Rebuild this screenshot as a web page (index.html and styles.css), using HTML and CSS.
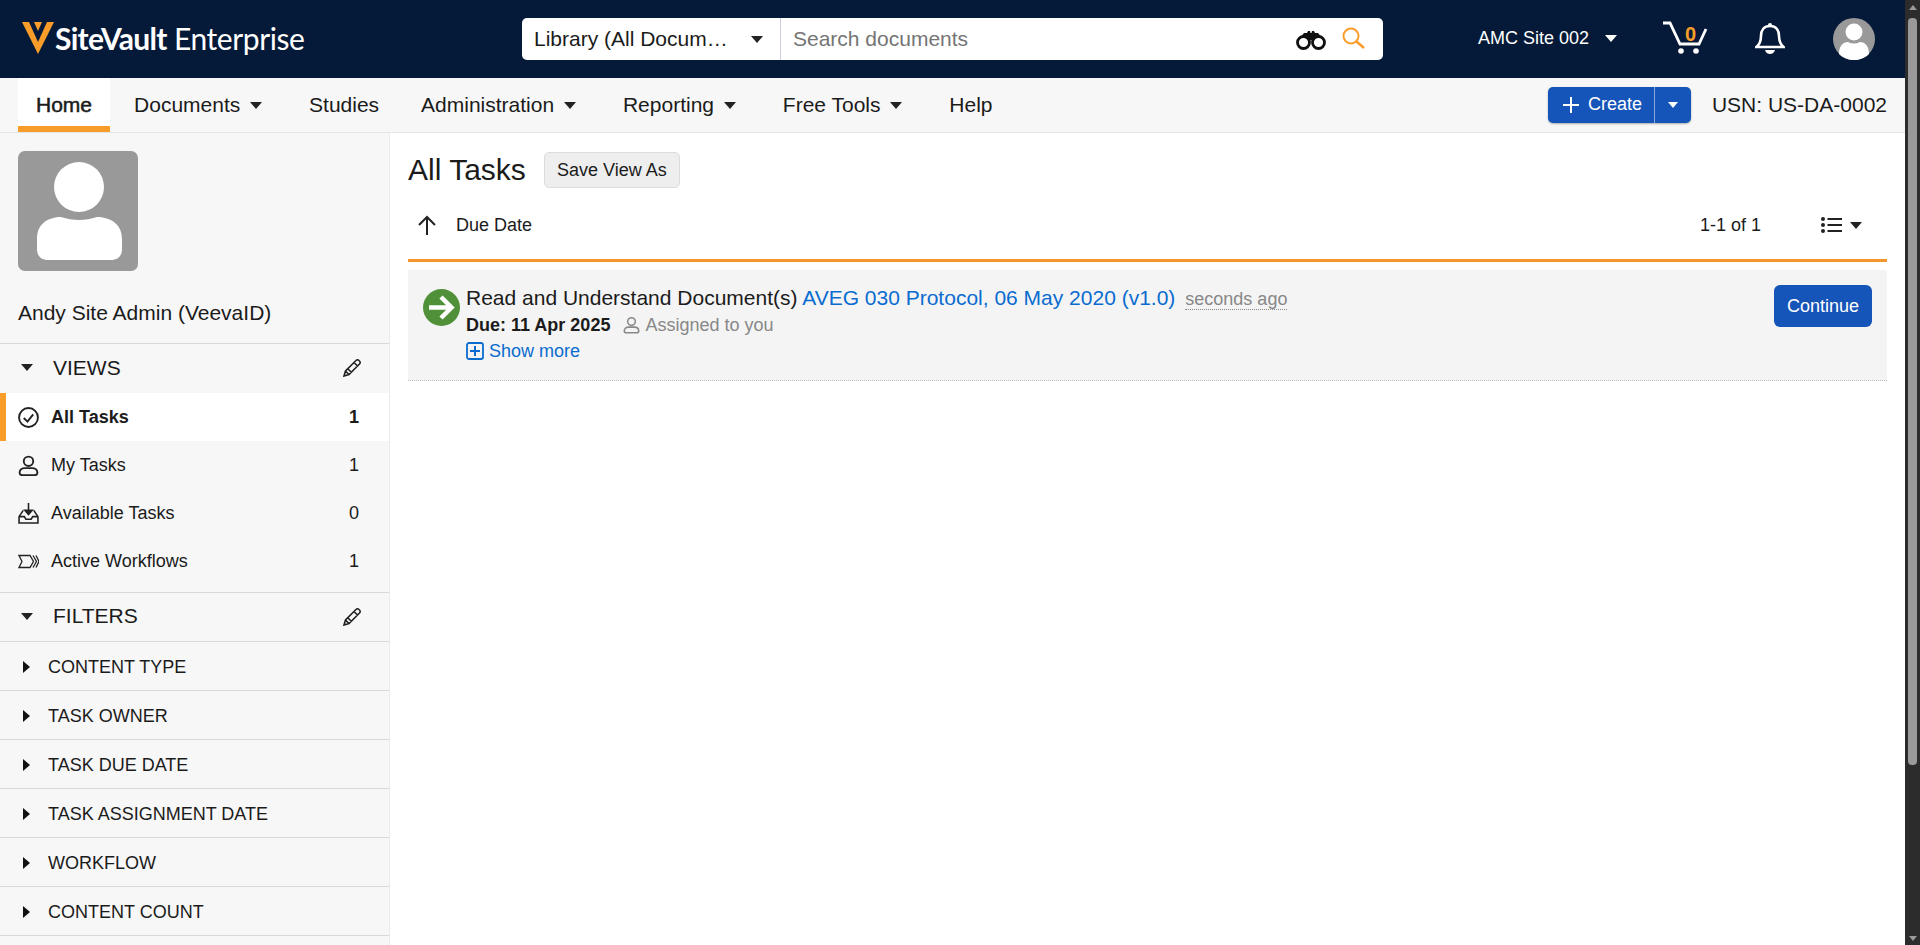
FILE: index.html
```html
<!DOCTYPE html>
<html lang="en">
<head>
<meta charset="utf-8">
<title>SiteVault Enterprise</title>
<link rel="stylesheet" href="styles.css">
</head>
<body>
<div class="app">
  <header class="topbar">
    <div class="logo">
      <svg class="logo-mark" viewBox="0 0 32 32"><path fill="#f99d2a" d="M0 0H32L16 32Z"/><path fill="#051a38" d="M7 0H25L16 20Z"/><path fill="#f99d2a" d="M12 0H20L16 9Z"/></svg>
      <span class="logo-text"><b>SiteVault</b> Enterprise</span>
    </div>
    <div class="search">
      <div class="scope"><span class="scope-text">Library (All Docum…</span><i class="caret caret-dark"></i></div>
      <div class="search-input">Search documents</div>
      <svg class="binoculars" viewBox="0 0 30 19"><circle cx="7.500" cy="11.500" r="6" fill="none" stroke="#111" stroke-width="2.800"/><circle cx="22.500" cy="11.500" r="6" fill="none" stroke="#111" stroke-width="2.800"/><path fill="#111" d="M3 8 8 2h3l1-2h2l.500 2h1L16 0h2l1 2h3l5 6-5-2.500-4 3.500h-6L8 5.500Z"/></svg>
      <svg class="magnifier" viewBox="0 0 23 22"><circle cx="9" cy="9" r="7.500" fill="none" stroke="#f99d2a" stroke-width="2"/><path d="M14.500 14.500 22 21" stroke="#f99d2a" stroke-width="2.500" fill="none"/></svg>
    </div>
    <div class="site">AMC Site 002<i class="caret caret-white"></i></div>
    <div class="cart">
      <svg class="cart-icon" viewBox="0 0 46 33"><path d="M1 2h7l10 21h19l7-15" fill="none" stroke="#fff" stroke-width="2.800"/><circle cx="19" cy="30" r="2.800" fill="#fff"/><circle cx="34" cy="30" r="2.800" fill="#fff"/></svg>
      <span class="cart-count">0</span>
    </div>
    <svg class="bell" viewBox="0 0 30 33"><path d="M15 4c-6 0-9 4-9 10 0 5-1 8-4.500 11h27C25 22 24 19 24 14c0-6-3-10-9-10Z" fill="none" stroke="#fff" stroke-width="2.600"/><circle cx="15" cy="3" r="2" fill="#fff"/><path d="M10 28h10c-1 3-3 4-5 4s-4-1-5-4Z" fill="#fff"/></svg>
    <svg class="user-avatar" viewBox="0 0 42 42"><circle cx="21" cy="21" r="21" fill="#999"/><circle cx="21" cy="14" r="8.500" fill="#fff"/><path d="M6 36c0-8 4-12 9-12 4 2 8 2 12 0 5 0 9 4 9 12-4 4-10 6-15 6s-11-2-15-6Z" fill="#fff"/></svg>
  </header>

  <nav class="navbar">
    <a class="nav-item nav-active">Home</a>
    <a class="nav-item">Documents<i class="caret caret-dark"></i></a>
    <a class="nav-item">Studies</a>
    <a class="nav-item">Administration<i class="caret caret-dark"></i></a>
    <a class="nav-item">Reporting<i class="caret caret-dark"></i></a>
    <a class="nav-item">Free Tools<i class="caret caret-dark"></i></a>
    <a class="nav-item">Help</a>
    <div class="nav-right">
      <div class="create">
        <span class="create-main"><svg class="plus" viewBox="0 0 16 16"><path d="M8 0v16M0 8h16" stroke="#fff" stroke-width="2"/></svg><span class="create-label">Create</span></span>
        <span class="create-drop"><i class="caret caret-white"></i></span>
      </div>
      <span class="usn">USN: US-DA-0002</span>
    </div>
  </nav>

  <div class="body">
    <aside class="sidebar">
      <div class="profile">
        <svg class="profile-pic" viewBox="0 0 120 120"><circle cx="61" cy="36" r="25" fill="#fff"/><path d="M19 90V88c0-16 12-22 24-22 12 4 24 4 36 0 12 0 25 6 25 22v10c0 7-4 11-11 11H30c-7 0-11-4-11-11Z" fill="#fff"/></svg>
        <div class="profile-name">Andy Site Admin (VeevaID)</div>
      </div>
      <div class="section-head">
        <i class="caret caret-dark"></i><span class="section-title">VIEWS</span>
        <svg class="pencil" viewBox="0 0 19 19"><path d="M1 18l1.500-5L13 2.500a2 2 0 0 1 3 0l.500.500a2 2 0 0 1 0 3L6 16.500ZM2.500 13l3.500 3.500M11 4.500l3.500 3.500M5 11l3.500 3.500" fill="none" stroke="#222" stroke-width="1.600"/></svg>
      </div>
      <ul class="views">
        <li class="view view-active">
          <svg class="view-icon" viewBox="0 0 20 20"><circle cx="10" cy="10" r="9" fill="none" stroke="#222" stroke-width="1.800"/><path d="M5.500 10.500 9 14l5.500-7" fill="none" stroke="#222" stroke-width="1.800"/></svg>
          <span class="view-label">All Tasks</span><span class="view-count">1</span>
        </li>
        <li class="view">
          <svg class="view-icon" viewBox="0 0 20 20"><circle cx="10" cy="6" r="4.500" fill="none" stroke="#222" stroke-width="1.800"/><path d="M4 19.200h12c1.500 0 2.500-1 2.500-2.200 0-3-2.500-4.500-5-4.500h-7c-2.500 0-5 1.500-5 4.500 0 1.200 1 2.200 2.500 2.200Z" fill="none" stroke="#222" stroke-width="1.800"/></svg>
          <span class="view-label">My Tasks</span><span class="view-count">1</span>
        </li>
        <li class="view">
          <svg class="view-icon" viewBox="0 0 20 20"><path d="M10 0v10M6.500 7 10 11l3.500-4Z" fill="#222" stroke="#222" stroke-width="1.500"/><path d="M5 7 1 13v6h18v-6l-4-6M1 13h5l1.500 2.500h5L14 13h5" fill="none" stroke="#222" stroke-width="1.500"/></svg>
          <span class="view-label">Available Tasks</span><span class="view-count">0</span>
        </li>
        <li class="view">
          <svg class="view-icon" viewBox="0 0 21 14"><path d="M1 1h11l3.500 6L12 13H1l3-6Z M15 1l3.500 6-3.500 6 M18 1l3 6-3 6" fill="none" stroke="#222" stroke-width="1.300"/></svg>
          <span class="view-label">Active Workflows</span><span class="view-count">1</span>
        </li>
      </ul>
      <div class="section-head section-filters">
        <i class="caret caret-dark"></i><span class="section-title">FILTERS</span>
        <svg class="pencil" viewBox="0 0 19 19"><path d="M1 18l1.500-5L13 2.500a2 2 0 0 1 3 0l.500.500a2 2 0 0 1 0 3L6 16.500ZM2.500 13l3.500 3.500M11 4.500l3.500 3.500M5 11l3.500 3.500" fill="none" stroke="#222" stroke-width="1.600"/></svg>
      </div>
      <div class="filter"><i class="caret-right"></i>CONTENT TYPE</div>
      <div class="filter"><i class="caret-right"></i>TASK OWNER</div>
      <div class="filter"><i class="caret-right"></i>TASK DUE DATE</div>
      <div class="filter"><i class="caret-right"></i>TASK ASSIGNMENT DATE</div>
      <div class="filter"><i class="caret-right"></i>WORKFLOW</div>
      <div class="filter"><i class="caret-right"></i>CONTENT COUNT</div>
    </aside>

    <main class="main">
      <div class="title-row">
        <h1 class="page-title">All Tasks</h1>
        <button class="save-view">Save View As</button>
      </div>
      <div class="sort-row">
        <svg class="sort-arrow" viewBox="0 0 20 20"><path d="M10 20V2M2 10l8-8 8 8" fill="none" stroke="#222" stroke-width="2"/></svg>
        <span class="sort-label">Due Date</span>
        <span class="pager">1-1 of 1</span>
        <svg class="list-icon" viewBox="0 0 21 16"><g fill="#222"><circle cx="2" cy="2" r="2"/><circle cx="2" cy="8" r="2"/><circle cx="2" cy="14" r="2"/><rect x="6.500" y="1" width="14.500" height="2"/><rect x="6.500" y="7" width="14.500" height="2"/><rect x="6.500" y="13" width="14.500" height="2"/></g></svg>
        <i class="caret caret-dark list-caret"></i>
      </div>
      <article class="task">
        <svg class="task-status" viewBox="0 0 37 37"><circle cx="18.500" cy="18.500" r="18.500" fill="#4f9038"/><path d="M6 18.500h22M18 8l10.500 10.500L18 29" fill="none" stroke="#fff" stroke-width="4.500"/></svg>
        <div class="task-body">
          <div class="task-title">Read and Understand Document(s) <a class="task-link">AVEG 030 Protocol, 06 May 2020 (v1.0)</a><span class="task-age">seconds ago</span></div>
          <div class="task-meta"><b class="task-due">Due: 11 Apr 2025</b>
            <svg class="assign-icon" viewBox="0 0 20 20"><circle cx="10" cy="6" r="4.500" fill="none" stroke="#888" stroke-width="1.800"/><path d="M4 19.200h12c1.500 0 2.500-1 2.500-2.200 0-3-2.500-4.500-5-4.500h-7c-2.500 0-5 1.500-5 4.500 0 1.200 1 2.200 2.500 2.200Z" fill="none" stroke="#888" stroke-width="1.800"/></svg>
            <span class="assigned">Assigned to you</span></div>
          <div class="task-more"><svg class="more-icon" viewBox="0 0 18 18"><rect x="1" y="1" width="16" height="16" rx="2" fill="none" stroke="#0a6cd0" stroke-width="1.800"/><path d="M9 4v10M4 9h10" stroke="#0a6cd0" stroke-width="2"/></svg><a class="task-link">Show more</a></div>
        </div>
        <button class="continue">Continue</button>
      </article>
    </main>
  </div>
</div>
<div class="scrollbar">
  <i class="sb-up"></i>
  <div class="sb-thumb"></div>
  <i class="sb-down"></i>
</div>
</body>
</html>
```

FILE: styles.css
```css
* { box-sizing: border-box; }
html, body { margin: 0; height: 945px; overflow: hidden; }
body { display: flex; font-family: "Liberation Sans", Arial, sans-serif; font-size: 18px; color: #1b1b1b; background: #fff; }
.app { flex: 1; min-width: 0; display: flex; flex-direction: column; }

.caret { display: inline-block; width: 0; height: 0; border-left: 6.500px solid transparent; border-right: 6.500px solid transparent; border-top: 7px solid #222; }
.caret-white { border-top-color: #fff; }
.caret-dark { border-top-color: #222; }
.caret-right { display: inline-block; width: 0; height: 0; border-top: 6px solid transparent; border-bottom: 6px solid transparent; border-left: 7px solid #111; margin: 0 18px 0 23px; }

.topbar { height: 78px; flex: none; background: #051a38; display: flex; align-items: center; padding-left: 22px; color: #fff; }
.logo { width: 500px; display: flex; align-items: center; }
.logo-mark { width: 32px; height: 32px; margin-right: 1px; margin-top: -2px; }
.logo-text { font-family: Lato, sans-serif; font-size: 30px; font-weight: 400; letter-spacing: -0.42px; margin-top: -3px; white-space: nowrap; }
.logo-text b { font-weight: 700; letter-spacing: -0.7px; }
.search { width: 861px; height: 42px; background: #fff; border-radius: 5px; display: flex; align-items: center; color: #1b1b1b; }
.scope { width: 259px; height: 42px; flex: none; display: flex; align-items: center; padding-left: 12px; border-right: 1px solid #cfcfe0; font-size: 21px; }
.scope-text { width: 217px; white-space: nowrap; }
.search-input { flex: 1; padding-left: 12px; font-size: 21px; color: #757575; }
.binoculars { width: 30px; height: 19px; margin-right: 16px; margin-top: 3px; }
.magnifier { width: 23px; height: 22px; margin-right: 18px; margin-top: -3px; }
.site { margin-left: 95px; width: 140px; font-size: 18px; flex: none; display: flex; align-items: center; margin-top: -2px; white-space: nowrap; }
.site .caret { margin-left: 16px; }
.cart { position: relative; width: 46px; height: 33px; margin-left: 44px; margin-top: -3px; flex: none; }
.cart-icon { width: 46px; height: 33px; display: block; }
.cart-count { position: absolute; left: 23px; top: 2px; font-size: 20px; font-weight: 700; color: #f99d2a; line-height: 23px; }
.bell { width: 30px; height: 33px; margin-left: 47px; flex: none; margin-top: -1px; }
.user-avatar { width: 42px; height: 42px; margin-left: 48px; flex: none; }

.navbar { height: 55px; flex: none; background: #f7f7f7; border-bottom: 1px solid #e6e6e6; display: flex; padding-left: 18px; padding-right: 18px; align-items: stretch; font-size: 21px; }
.nav-item { display: flex; align-items: center; padding: 0 18px; margin-right: 6px; height: 54px; white-space: nowrap; }
.nav-item .caret { margin-left: 10px; margin-right: 4.800px; }
.nav-active { background: #fff; border-bottom: 6px solid #f99d2a; font-weight: 400; -webkit-text-stroke: 0.5px #1b1b1b; margin-right: 6px; padding-top: 6px; }
.nav-right { margin-left: auto; display: flex; align-items: center; }
.create { display: flex; height: 36px; border-radius: 5px; background: #1554b8; color: #fff; box-shadow: 0 1px 2px rgba(0,0,0,.3); }
.create-main { width: 107px; display: flex; align-items: center; padding-left: 15px; font-size: 18px; border-right: 1px solid #8aa8dc; }
.create-label { margin-top: -2px; }
.plus { width: 16px; height: 16px; margin-right: 9px; }
.create-drop { width: 36px; display: flex; align-items: center; justify-content: center; }
.create-drop .caret { border-left-width: 5.500px; border-right-width: 5.500px; border-top-width: 6px; }
.usn { margin-left: 21px; font-size: 21px; }

.body { flex: 1; min-height: 0; display: flex; }
.sidebar { width: 390px; flex: none; background: #f7f7f7; border-right: 1px solid #ececec; overflow: hidden; }
.profile { height: 211px; padding: 18px 18px 0; border-bottom: 1px solid #d9d9d9; }
.profile-pic { display: block; width: 120px; height: 120px; background: #999; border-radius: 7px; }
.profile-name { margin-top: 29px; font-size: 21px; line-height: 26px; }
.section-head { height: 49px; display: flex; align-items: center; padding-left: 21px; padding-bottom: 2px; font-size: 21px; }
.section-head .caret { flex: none; }
.section-title { margin-left: 20px; flex: 1; }
.section-filters { height: 49px; border-bottom: 1px solid #d9d9d9; }
.pencil { width: 19px; height: 19px; margin-right: 27px; flex: none; }
.views { list-style: none; margin: 0; padding: 0 0 7px; border-bottom: 1px solid #d9d9d9; }
.view { height: 48px; display: flex; align-items: center; padding-left: 18px; padding-right: 30px; font-size: 18px; }
.view-active { background: #fff; border-left: 6px solid #f99d2a; padding-left: 12px; font-weight: 700; }
.view-icon { width: 21px; height: 21px; margin-right: 12px; flex: none; }
.view-label { flex: 1; }
.filter { height: 49px; display: flex; align-items: center; border-bottom: 1px solid #d9d9d9; font-size: 18px; padding-top: 2px; }

.main { flex: 1; min-width: 0; padding: 0 18px; }
.title-row { display: flex; align-items: center; height: 36px; margin-top: 19px; }
.page-title { margin: 0; font-size: 30px; font-weight: 400; line-height: 36px; }
.save-view { margin-left: 18px; width: 136px; height: 36px; border: 1px solid #dcdcdc; border-radius: 5px; background: #eee; font: 18px "Liberation Sans", Arial, sans-serif; color: #1b1b1b; padding: 0; }
.sort-row { height: 74px; display: flex; align-items: center; border-bottom: 3px solid #f5962c; font-size: 18px; padding-top: 3px; }
.sort-arrow { width: 20px; height: 20px; margin-left: 9px; flex: none; }
.sort-label { margin-left: 19px; flex: 1; }
.pager { margin-right: 60px; }
.list-icon { width: 21px; height: 16px; }
.list-caret { margin-left: 8px; margin-right: 25px; }
.task { margin-top: 8px; height: 111px; background: #f4f4f4; border-bottom: 1px dotted #bbb; display: flex; padding: 15px 15px 0 15px; position: relative; }
.task-status { width: 37px; height: 37px; margin-top: 4px; flex: none; }
.task-body { flex: 1; margin-left: 6px; }
.task-title { font-size: 21px; line-height: 26px; white-space: nowrap; }
.task-link { color: #0a6cd0; }
.task-age { margin-left: 10px; font-size: 18px; color: #888; border-bottom: 1px dotted #888; }
.task-meta { font-size: 18px; line-height: 26px; display: flex; align-items: center; }
.task-due { font-weight: 700; color: #1b1b1b; }
.assign-icon { width: 17px; height: 18px; margin-left: 13px; margin-right: 5px; }
.assigned { color: #888; }
.task-more { font-size: 18px; line-height: 26px; display: flex; align-items: center; }
.more-icon { width: 18px; height: 18px; margin-right: 5px; }
.continue { align-self: flex-start; width: 98px; height: 42px; background: #1554b8; color: #fff; border: 0; border-radius: 6px; font: 18px "Liberation Sans", Arial, sans-serif; padding: 0; }

.scrollbar { width: 15px; flex: none; height: 945px; background: #2c2c2c; display: flex; flex-direction: column; align-items: center; }
.sb-up { width: 0; height: 0; margin-top: 5px; border-left: 4.500px solid transparent; border-right: 4.500px solid transparent; border-bottom: 5px solid #9a9a9a; flex: none; }
.sb-thumb { width: 9px; height: 747px; margin-top: 8px; background: #9a9a9a; border-radius: 4px; flex: none; }
.sb-down { width: 0; height: 0; margin-top: auto; margin-bottom: 4px; border-left: 4.500px solid transparent; border-right: 4.500px solid transparent; border-top: 5px solid #9a9a9a; flex: none; }
```
